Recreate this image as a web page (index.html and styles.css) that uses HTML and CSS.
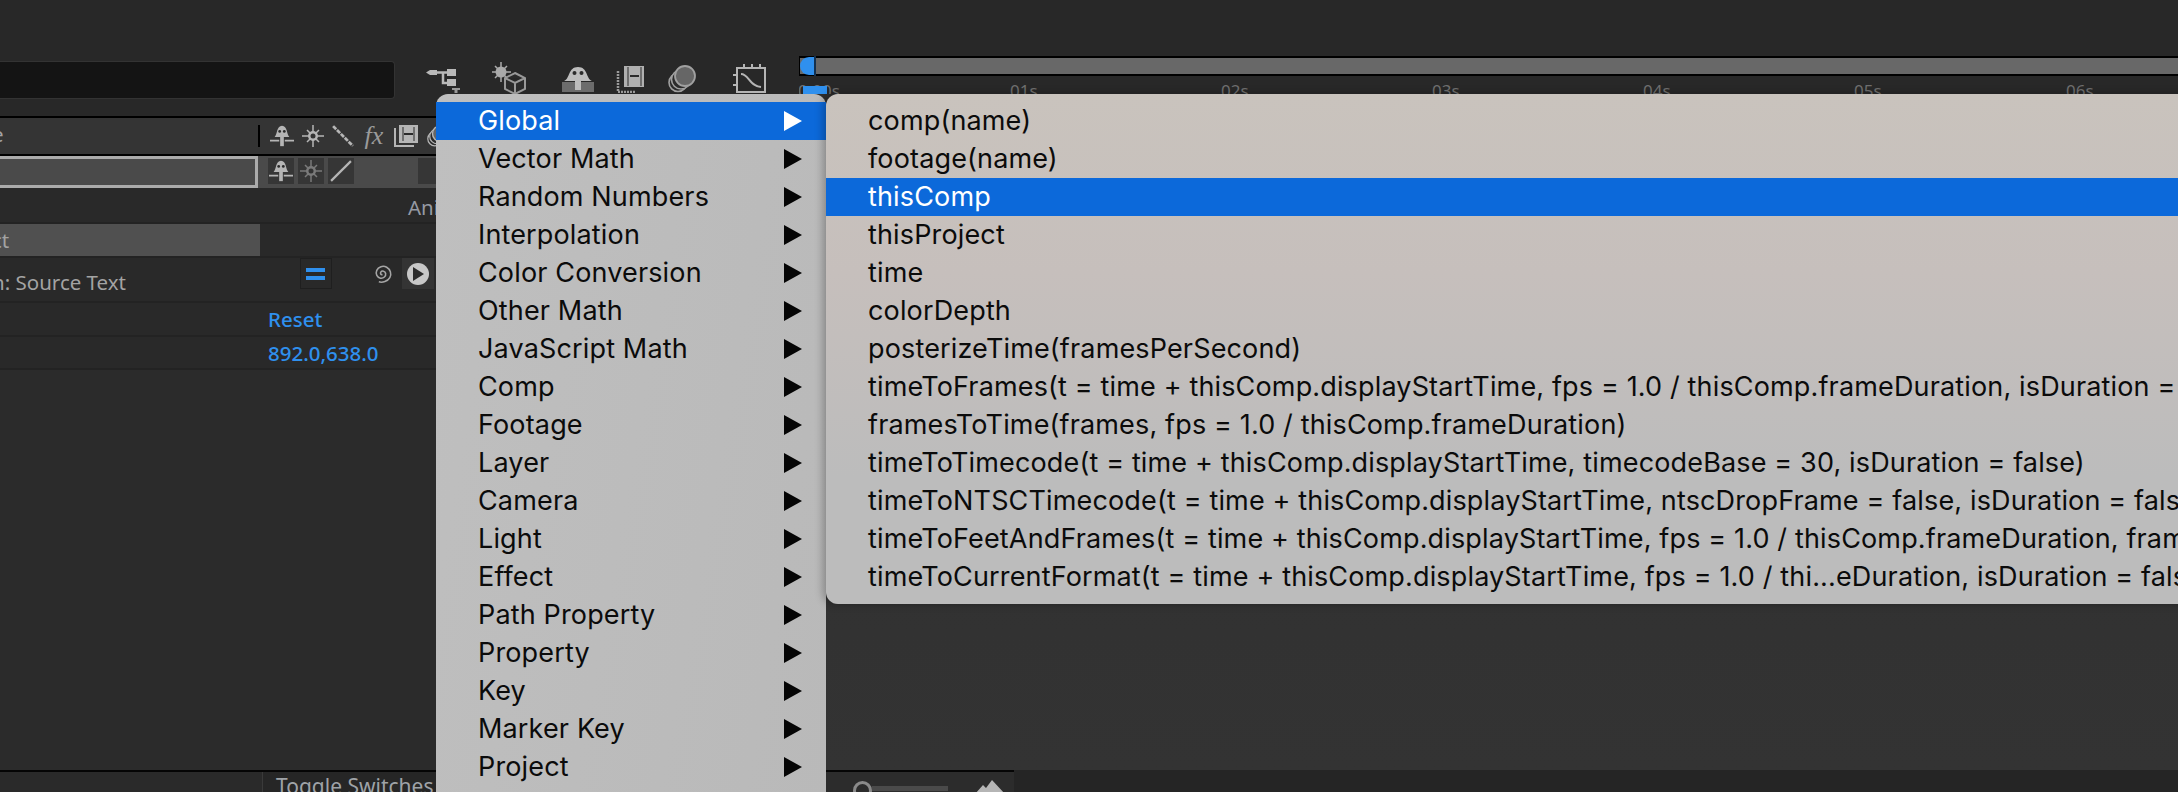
FILE: index.html
```html
<!DOCTYPE html>
<html lang="en">
<head>
  <meta charset="UTF-8">
  <title>Expression language menu</title>
  <link rel="stylesheet" href="styles.css">
</head>
<body>
  <svg class="defs" width="0" height="0">
    <symbol id="i-shy" viewBox="0 0 26 22">
      <path d="M5 12C8 10 7 0 13 0s5 10 8 12z" fill="currentColor"/>
      <circle cx="10.500" cy="6" r="1.500" fill="#2b2b2b"/><circle cx="15.500" cy="6" r="1.500" fill="#2b2b2b"/>
      <path d="M11 11h4v11h-4z" fill="currentColor"/>
      <path d="M0 16h10M16 16h10" stroke="currentColor" stroke-width="2"/>
    </symbol>
    <symbol id="i-sun" viewBox="0 0 22 22">
      <path d="M11 0v22M0 11h22M5 5l12 12M17 5L5 17" stroke="currentColor" stroke-width="1.500"/>
      <circle cx="11" cy="11" r="5" fill="currentColor"/>
      <circle cx="11" cy="11" r="2.500" fill="#333"/>
    </symbol>
    <symbol id="i-film" viewBox="0 0 24 22">
      <path d="M1 3v18h19" fill="none" stroke="currentColor" stroke-width="2"/>
      <path d="M5 0h19v18H5z" fill="currentColor"/>
      <path d="M10 9h9" stroke="#2b2b2b" stroke-width="2"/>
      <path d="M9 2v14M20 2v14" stroke="#2b2b2b" stroke-width="1"/>
    </symbol>
    <symbol id="i-discs" viewBox="0 0 28 28">
      <circle cx="10" cy="17.500" r="9" fill="#2b2b2b" stroke="currentColor" stroke-width="1.600"/>
      <circle cx="13" cy="14.500" r="9.500" fill="#2b2b2b" stroke="currentColor" stroke-width="1.600"/>
      <circle cx="17" cy="11" r="10" fill="#666" stroke="currentColor" stroke-width="1.800"/>
    </symbol>
  </svg>

  <div class="stage">
    <section class="layers">
      <div class="searchbar"><div class="search"></div></div>
      <div class="colhead">
        <div class="namecell"><span class="cut">e</span></div>
        <div class="heads">
          <svg class="sw"><use href="#i-shy"/></svg>
          <svg class="sw small"><use href="#i-sun"/></svg>
          <svg class="sw small" viewBox="0 0 20 20"><path d="M1 1l18 18" stroke="currentColor" stroke-width="2.500" stroke-dasharray="4 1"/></svg>
          <span class="fx">fx</span>
          <svg class="sw"><use href="#i-film"/></svg>
          <svg class="sw"><use href="#i-discs"/></svg>
        </div>
      </div>
      <div class="layer">
        <div class="namecell"></div>
        <div class="switches">
          <span class="box"><svg class="sw"><use href="#i-shy"/></svg></span>
          <span class="box"><svg class="sw small dim"><use href="#i-sun"/></svg></span>
          <span class="box"><svg class="sw small" viewBox="0 0 20 20"><path d="M1 19L19 1" stroke="currentColor" stroke-width="2"/></svg></span>
          <span class="box last"></span>
        </div>
      </div>
      <div class="row r-anim"><span class="animate">Animate:</span></div>
      <div class="row r-text"><div class="textbar"><span class="cut">ct</span></div></div>
      <div class="row r-expr">
        <span class="cut srctext">n: Source Text</span>
        <span class="equals"><i></i><i></i></span>
        <svg class="spiral" viewBox="0 0 22 22"><path d="M11 12c-1.500.5-2.500-1-1.500-2.500s4-1 4.500 1.500-2 5-5 4.500-5-4-3.500-7.500 6-5 9.500-3 5 6.500 3 10-7 5-10.500 4" fill="none" stroke="currentColor" stroke-width="1.500"/></svg>
        <span class="playbox"><span class="play"></span></span>
      </div>
      <div class="row r-val"><span class="link">Reset</span></div>
      <div class="row r-val r-last"><span class="link">892.0,638.0</span></div>
      <div class="rest"></div>
      <div class="footer"><span class="tab">Toggle Switches / Modes</span></div>
    </section>

    <section class="timeline">
      <div class="toptrack"></div>
      <div class="bar"><span class="knob"></span><span class="knobline"></span></div>
      <div class="ruler">
        <span class="tick">0:00s</span>
        <span class="tick">01s</span>
        <span class="tick">02s</span>
        <span class="tick">03s</span>
        <span class="tick">04s</span>
        <span class="tick">05s</span>
        <span class="tick">06s</span>
        <span class="head"></span>
      </div>
      <div class="tracks"></div>
      <div class="tfooter">
        <div class="tf-controls">
          <span class="slider-knob"></span><span class="slider-track"></span>
          <svg class="mountain" viewBox="0 0 30 14"><path d="M0 14L8 5l3 3 6-8 13 14z" fill="#b5b5b5"/></svg>
        </div>
        <div class="tf-rest"></div>
      </div>
    </section>

    <!-- icons above the timeline -->
    <div class="tools">
      <svg class="tool t-flow" viewBox="0 0 34 24">
        <path d="M0 3.500l4-2.500h7v5H4z" fill="#b9b9b9"/>
        <path d="M11 3.500h11M17 3.500v10.500h5" fill="none" stroke="#b9b9b9" stroke-width="2.500"/>
        <path d="M21 0h9v7h-9zM21 10h9v7h-9z" fill="#b9b9b9"/>
        <path d="M26 19h8v2h-2.500v3h-3v-3H26z" fill="#999"/>
      </svg>
      <svg class="tool t-cube" viewBox="0 0 36 33">
        <path d="M9 0v20M0 10h19M3 4l12 12M15 4L3 16" stroke="#aaa" stroke-width="1.500"/>
        <circle cx="9" cy="10" r="5.500" fill="#aaa"/>
        <path d="M23 11l10 5v11l-10 5-10-5V16zM13 16l10 5 10-5M23 21v11" fill="#2b2b2b" stroke="#999" stroke-width="2"/>
      </svg>
      <svg class="tool t-shy" viewBox="0 0 32 25">
        <path d="M0 15h32v10H0z" fill="#6c6c6c"/>
        <path d="M2 14C8 12 6 0 16 0s8 12 14 14z" fill="#bdbdbd"/>
        <circle cx="12.500" cy="6" r="2" fill="#2b2b2b"/><circle cx="19.500" cy="6" r="2" fill="#2b2b2b"/>
        <path d="M13 12h6v11h-6z" fill="#bdbdbd"/>
      </svg>
      <svg class="tool t-film" viewBox="0 0 28 27">
        <path d="M2 5v21h18" fill="none" stroke="#9a9a9a" stroke-width="2.500" stroke-dasharray="2 1"/>
        <path d="M8 0h20v21H8z" fill="#b0b0b0"/>
        <path d="M14 10h9" stroke="#2b2b2b" stroke-width="2"/>
        <path d="M12 1v19M25 1v19" stroke="#2b2b2b" stroke-width="1"/>
      </svg>
      <svg class="tool t-discs" viewBox="0 0 28 28"><use href="#i-discs" color="#a0a0a0"/></svg>
      <svg class="tool t-graph" viewBox="0 0 33 29">
        <path d="M4 4h28v24H4z" fill="none" stroke="#b5b5b5" stroke-width="2"/>
        <path d="M11 0v4M19 0v4M27 0v4M0 11h4M0 21h4" stroke="#b5b5b5" stroke-width="2"/>
        <path d="M8 10c8 0 8 12 20 13" fill="none" stroke="#b5b5b5" stroke-width="2"/>
      </svg>
    </div>

    <ul class="menu main-menu">
      <li class="on">Global</li>
      <li>Vector Math</li>
      <li>Random Numbers</li>
      <li>Interpolation</li>
      <li>Color Conversion</li>
      <li>Other Math</li>
      <li>JavaScript Math</li>
      <li>Comp</li>
      <li>Footage</li>
      <li>Layer</li>
      <li>Camera</li>
      <li>Light</li>
      <li>Effect</li>
      <li>Path Property</li>
      <li>Property</li>
      <li>Key</li>
      <li>Marker Key</li>
      <li>Project</li>
    </ul>

    <ul class="menu sub-menu">
      <li>comp(name)</li>
      <li>footage(name)</li>
      <li class="on">thisComp</li>
      <li>thisProject</li>
      <li>time</li>
      <li>colorDepth</li>
      <li>posterizeTime(framesPerSecond)</li>
      <li>timeToFrames(t = time + thisComp.displayStartTime, fps = 1.0 / thisComp.frameDuration, isDuration = false)</li>
      <li>framesToTime(frames, fps = 1.0 / thisComp.frameDuration)</li>
      <li>timeToTimecode(t = time + thisComp.displayStartTime, timecodeBase = 30, isDuration = false)</li>
      <li>timeToNTSCTimecode(t = time + thisComp.displayStartTime, ntscDropFrame = false, isDuration = false)</li>
      <li>timeToFeetAndFrames(t = time + thisComp.displayStartTime, fps = 1.0 / thisComp.frameDuration, framesPerFoot = 16, isDuration = false)</li>
      <li>timeToCurrentFormat(t = time + thisComp.displayStartTime, fps = 1.0 / thi...eDuration, isDuration = false)</li>
    </ul>
  </div>
</body>
</html>
```

FILE: styles.css
```css
* { box-sizing: border-box; }
html, body { margin: 0; height: 100%; background: #282828; overflow: hidden; }

.defs { position: absolute; }

.stage {
  position: relative;
  display: flex;
  width: 2178px;
  height: 792px;
  overflow: hidden;
  font-family: "Noto Sans", sans-serif;
  color: #a3a3a3;
}

/* left panel */
.layers {
  display: flex;
  flex-direction: column;
  width: 799px;
  flex: none;
}
.searchbar { height: 116px; padding-top: 61px; }
.search {
  width: 395px;
  height: 38px;
  background: #141414;
  border: 1px solid #333;
  border-left: 0;
  border-radius: 0 4px 4px 0;
}
.colhead {
  display: flex;
  height: 40px;
  background: #343434;
  border-top: 2px solid #000;
  border-bottom: 2px solid #000;
}
.namecell { width: 258px; flex: none; overflow: hidden; }
.cut { display: block; margin-left: -8px; font-size: 20.500px; line-height: 32px; }
.heads {
  display: flex;
  align-items: center;
  gap: 8px;
  padding-left: 10px;
  border-left: 2px solid #000;
  height: 22px;
  margin-top: 7px;
  color: #a8a8a8;
}
.sw { width: 24px; height: 22px; color: #b5b5b5; flex: none; }
.sw.small { width: 22px; height: 22px; }
.sw.dim { color: #7a7a7a; }
.fx {
  width: 24px;
  font: italic 26px "Liberation Serif", serif;
  color: #9a9a9a;
  text-align: center;
}

.layer { display: flex; height: 32px; background: #4a4a4a; }
.layer .namecell { border: 3px solid #ababab; border-left: 0; height: 32px; }
.switches { display: flex; gap: 4px; padding: 2px 0 0 10px; }
.box {
  display: flex;
  align-items: center;
  justify-content: center;
  width: 26px;
  height: 26px;
  background: #363636;
}
.box.last { margin-left: 60px; width: 60px; }

.row { position: relative; display: flex; border-bottom: 2px solid #232323; background: #292929; }
.r-anim { height: 36px; }
.animate { position: absolute; left: 408px; top: 5px; font-size: 20.500px; color: #969aa3; white-space: nowrap; }
.r-text { height: 34px; }
.textbar { width: 260px; height: 32px; background: #505050; overflow: hidden; }
.r-expr { height: 45px; }
.srctext { position: absolute; left: 0; top: 8px; white-space: nowrap; }
.equals {
  position: absolute;
  left: 300px;
  top: 0;
  display: flex;
  flex-direction: column;
  justify-content: center;
  gap: 4px;
  width: 32px;
  height: 31px;
  padding: 0 5px;
  border: 1px solid #1f1f1f;
}
.equals i { display: block; width: 19px; height: 4px; background: #2f90ee; }
.spiral { position: absolute; left: 371px; top: 4px; width: 23px; height: 23px; color: #a5a5a5; }
.playbox {
  position: absolute;
  left: 402px;
  top: 0;
  width: 32px;
  height: 31px;
  padding: 5px;
  background: #343434;
}
.play {
  position: relative;
  display: block;
  width: 22px;
  height: 22px;
  border-radius: 50%;
  background: #c8c8c8;
}
.play::after {
  content: "";
  position: absolute;
  left: 6px;
  top: 4px;
  border-left: 11px solid #2b2b2b;
  border-top: 7px solid transparent;
  border-bottom: 7px solid transparent;
}
.r-val { height: 34px; padding-left: 268px; }
.r-last { height: 33px; }
.link { font-size: 20.500px; line-height: 32px; color: #2f90ee; font-weight: 500; }
.rest { flex: 1; background: #2b2b2b; }
.footer { height: 22px; border-top: 2px solid #050505; padding-left: 262px; background: #2a2a2a; }
.tab {
  display: block;
  height: 20px;
  padding: 0 0 0 13px;
  border-left: 1px solid #3a3a3a;
  background: #262626;
  font-size: 21px;
  line-height: 28px;
  color: #9fa3a8;
  white-space: nowrap;
  overflow: hidden;
}

/* timeline */
.timeline { display: flex; flex-direction: column; flex: 1; min-width: 0; }
.toptrack { height: 56px; background: #282828; }
.bar {
  position: relative;
  height: 20px;
  background: #686868;
  border-top: 2px solid #000;
  border-bottom: 2px solid #000;
  border-left: 1px solid #000;
}
.knob {
  position: absolute;
  left: 0;
  top: -1px;
  width: 15px;
  height: 18px;
  background: #2f90ee;
  border-radius: 9px 0 0 9px;
}
.knobline { position: absolute; left: 14px; top: -2px; width: 2px; height: 20px; background: #14314f; }
.ruler { position: relative; height: 18px; background: #282828; overflow: hidden; }
.tick {
  position: absolute;
  top: 3px;
  font-size: 17px;
  line-height: 24px;
  color: #6f6f6f;
}
.tick:nth-child(1) { left: -1px; }
.tick:nth-child(2) { left: 211px; }
.tick:nth-child(3) { left: 422px; }
.tick:nth-child(4) { left: 633px; }
.tick:nth-child(5) { left: 844px; }
.tick:nth-child(6) { left: 1055px; }
.tick:nth-child(7) { left: 1267px; }
.head { position: absolute; left: 4px; top: 10px; width: 24px; height: 8px; background: #2f90ee; }
.tracks { flex: 1; background: linear-gradient(#2e2e2e, #333); }
.tfooter { display: flex; height: 22px; border-top: 2px solid #050505; background: #2c2c2c; }
.tf-controls { position: relative; width: 215px; height: 20px; }
.tf-rest { flex: 1; height: 22px; margin-top: -2px; background: #252525; }
.slider-knob {
  position: absolute;
  left: 54px;
  top: 9px;
  width: 19px;
  height: 19px;
  border: 3px solid #8a8a8a;
  border-radius: 50%;
}
.slider-track { position: absolute; left: 73px; top: 14px; width: 76px; height: 5px; background: #4a4a4a; }
.mountain { position: absolute; left: 176px; top: 8px; width: 30px; height: 14px; }

/* icons over the timeline head */
.tools { position: absolute; left: 426px; top: 62px; width: 340px; height: 32px; }
.tool { position: absolute; }
.t-flow { left: 0; top: 7px; width: 34px; height: 24px; }
.t-cube { left: 66px; top: 0; width: 36px; height: 33px; }
.t-shy { left: 136px; top: 5px; width: 32px; height: 25px; }
.t-film { left: 190px; top: 4px; width: 28px; height: 27px; }
.t-discs { left: 242px; top: 3px; width: 28px; height: 28px; }
.t-graph { left: 307px; top: 2px; width: 33px; height: 29px; }

/* context menus */
.menu {
  position: absolute;
  top: 94px;
  margin: 0;
  padding: 8px 0;
  list-style: none;
  font-family: Inter, "Liberation Sans", sans-serif;
  font-size: 27px;
  letter-spacing: .15px;
  color: #0b0b0b;
  white-space: nowrap;
}
.menu li { height: 38px; line-height: 37px; }
.menu li.on { background: #0c69da; color: #fff; }

.main-menu {
  left: 436px;
  width: 390px;
  height: 720px;
  border-radius: 12px;
  background: linear-gradient(100deg, #bfbfbf, #b9b9b9);
}
.main-menu li { position: relative; padding-left: 42px; }
.main-menu li::after {
  content: "";
  position: absolute;
  left: 348px;
  top: 9px;
  border-left: 18px solid #050505;
  border-top: 10px solid transparent;
  border-bottom: 10px solid transparent;
}
.main-menu li.on::after { border-left-color: #fff; }

.sub-menu {
  left: 826px;
  width: 1400px;
  height: 510px;
  overflow: hidden;
  border-radius: 12px;
  background: linear-gradient(#c9c3bd, #c6bfbc 35%, #bcbcbc 75%, #bcbcbc);
  box-shadow: -3px 0 8px rgba(0, 0, 0, .28);
}
.sub-menu li { padding-left: 42px; }
```
